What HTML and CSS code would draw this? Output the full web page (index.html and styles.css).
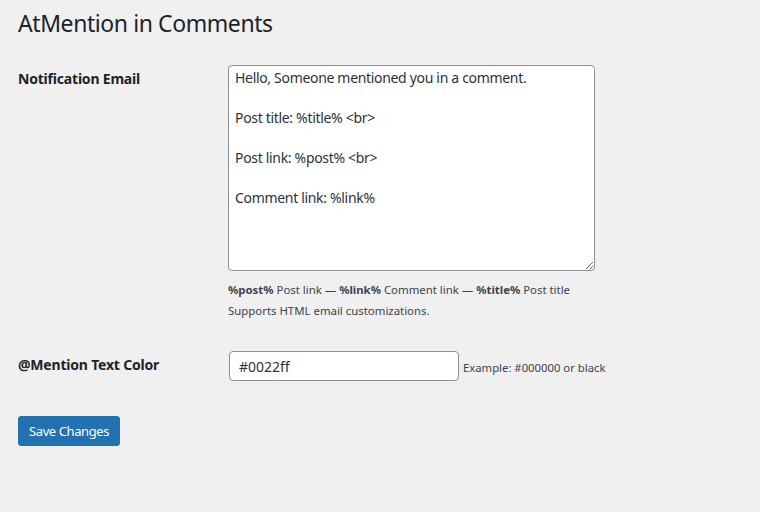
FILE: index.html
```html
<!DOCTYPE html>
<html lang="en">
<head>
<meta charset="utf-8">
<title>AtMention in Comments</title>
<link rel="stylesheet" href="styles.css">
</head>
<body>
<div class="wrap">
  <h1 class="title">AtMention in Comments</h1>
  <form class="settings">
    <div class="row row-email">
      <div class="label">Notification Email</div>
      <div class="field">
        <textarea class="email-text" rows="10">Hello, Someone mentioned you in a comment.

Post title: %title% &lt;br&gt;

Post link: %post% &lt;br&gt;

Comment link: %link%</textarea>
        <p class="description"><strong>%post%</strong> Post link — <strong>%link%</strong> Comment link — <strong>%title%</strong> Post title<br>Supports HTML email customizations.</p>
      </div>
    </div>
    <div class="row row-color">
      <div class="label">@Mention Text Color</div>
      <div class="field inline">
        <input class="color-input" type="text" value="#0022ff">
        <span class="hint">Example: #000000 or black</span>
      </div>
    </div>
    <div class="submit">
      <button type="button" class="button-primary">Save Changes</button>
    </div>
  </form>
</div>
</body>
</html>
```

FILE: styles.css
```css
html, body {
  margin: 0;
  padding: 0;
  background: #f0f0f1;
  color: #1d2327;
  font-family: "Noto Sans", "Open Sans", sans-serif;
  font-size: 14px;
}

.wrap {
  padding: 0 0 0 18px;
}

.title {
  margin: 0;
  padding: 8px 0 0;
  font-size: 23px;
  font-weight: 400;
  line-height: 30px;
  letter-spacing: -0.42px;
}

.settings {
  margin-top: 12px;
}

.row {
  display: flex;
}

.label {
  width: 200px;
  padding: 20px 10px 0 0;
  font-weight: 700;
  font-size: 14px;
  line-height: 18px;
  letter-spacing: -0.2px;
}

.field {
  padding: 15px 0;
}

.field.inline {
  display: flex;
  align-items: center;
  gap: 4px;
  align-self: flex-start;
}

.email-text {
  display: block;
  box-sizing: border-box;
  width: 367px;
  height: 206px;
  margin: 0;
  padding: 2px 6px;
  border: 1px solid #8c8f94;
  border-radius: 4px;
  background: #fff;
  color: #2c3338;
  font-family: inherit;
  font-size: 14px;
  line-height: 20px;
  letter-spacing: -0.32px;
  resize: vertical;
}

.description {
  margin: 8px 0 0;
  font-size: 11.4px;
  line-height: 21px;
  color: #3c434a;
}

.description strong {
  font-weight: 700;
}

.color-input {
  box-sizing: border-box;
  width: 230px;
  height: 30px;
  margin: 0 0 0 1px;
  padding: 0 9px;
  border: 1px solid #8c8f94;
  border-radius: 4px;
  background: #fff;
  color: #2c3338;
  font-family: inherit;
  font-size: 14px;
}

.hint {
  font-size: 11.3px;
  color: #3c434a;
  padding-top: 2px;
}

.submit {
  padding-top: 20px;
}

.button-primary {
  height: 30px;
  padding: 0 10px;
  border: 1px solid #2271b1;
  border-radius: 3px;
  background: #2271b1;
  color: #fff;
  font-family: inherit;
  font-size: 13px;
  letter-spacing: -0.4px;
  cursor: pointer;
}
```
